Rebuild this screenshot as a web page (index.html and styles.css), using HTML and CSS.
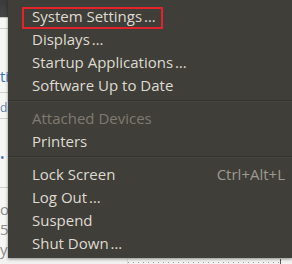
FILE: index.html
```html
<!DOCTYPE html>
<html lang="en">
<head>
  <meta charset="UTF-8" />
  <title>System menu</title>
  <link rel="stylesheet" href="styles.css">
</head>
<body>

<div class="desktop">
  <div class="titlebar"></div>
  <div class="sheet">
    <div class="strip">
      <div class="cell c1"></div>
      <div class="cell c2"><span class="blue">tions</span></div>
      <div class="cell c3"><span class="tan">dd</span></div>
      <div class="cell c4"><span class="blue small">•</span></div>
      <div class="cell c5">
        <span class="grey">ort</span>
        <span class="grey">56</span>
        <span class="grey">ys</span>
      </div>
    </div>
  </div>
  <div class="footer">
    <div class="gap"></div>
    <div class="dots"></div>
    <div class="bar"></div>
  </div>
</div>

<div class="menu">
  <div class="item current">
    <span class="label">System Settings<span class="more">…</span></span>
  </div>
  <div class="item"><span class="label">Displays<span class="more">…</span></span></div>
  <div class="item"><span class="label">Startup Applications<span class="more">…</span></span></div>
  <div class="item"><span class="label">Software Up to Date</span></div>
  <div class="sep"></div>
  <div class="item disabled"><span class="label">Attached Devices</span></div>
  <div class="item"><span class="label">Printers</span></div>
  <div class="sep"></div>
  <div class="item">
    <span class="label">Lock Screen</span>
    <span class="accel">Ctrl+Alt+L</span>
  </div>
  <div class="item"><span class="label">Log Out<span class="more">…</span></span></div>
  <div class="item"><span class="label">Suspend</span></div>
  <div class="item"><span class="label">Shut Down<span class="more">…</span></span></div>
</div>

</body>
</html>
```

FILE: styles.css
```css
html, body {
  margin: 0;
  height: 100%;
  overflow: hidden;
}

body {
  position: relative;
  background: #f4f4f3;
  font-family: "Open Sans", "Noto Sans", sans-serif;
}

.desktop {
  display: flex;
  flex-direction: column;
  height: 264px;
}

.titlebar {
  height: 22px;
  background: linear-gradient(#3b3b3b, #454545);
  border-bottom: 1px solid #c9c9c9;
}

.sheet {
  flex: 1;
  background: #f6f6f5;
}

/* what peeks out to the left of the menu */
.strip {
  width: 60px;
  display: flex;
  flex-direction: column;
}

.cell {
  border-bottom: 1px solid #cfcfcd;
  white-space: nowrap;
  font-size: 15px;
  line-height: 15px;
}

.c1 { height: 10px; }
.c2 { height: 64px; padding-top: 40px; box-sizing: border-box; }
.c3 { height: 26px; padding-top: 6px; box-sizing: border-box; }
.c4 { height: 69px; padding-top: 30px; box-sizing: border-box; }
.c5 {
  border-bottom: none;
  display: flex;
  flex-direction: column;
  padding-top: 11px;
}

.blue { color: #3f74c1; }
.tan { color: #5d7fb8; font-size: 12px; }
.grey { color: #8c8c8a; font-size: 15px; line-height: 20px; }
.small { font-size: 12px; }

.footer {
  height: 6px;
  display: flex;
  background: #f2f2f1;
}

.gap { width: 127px; }

.dots {
  width: 152px;
  border-left: 1px solid #dcdcdc;
  background: repeating-linear-gradient(90deg, #9e9e9c 0 1px, transparent 1px 5px) 0 3px / 100% 1px no-repeat;
}

.bar {
  width: 1px;
  background: #555;
}

/* the open indicator menu */
.menu {
  position: absolute;
  top: 0;
  left: 8px;
  right: 0;
  height: 258px;
  box-sizing: border-box;
  padding-top: 4px;
  background: #403e38;
  box-shadow: 0 1px 3px rgba(0,0,0,0.45);
  color: #dfdbd2;
  font-size: 15px;
}

.item {
  position: relative;
  height: 23px;
  display: flex;
  align-items: center;
  padding: 0 7px 0 24px;
}

.label {
  flex: 1;
  white-space: nowrap;
}

.more {
  margin-left: 2px;
}

.accel {
  color: #9d9a92;
}

.disabled {
  color: #7e7b73;
}

.current .label::after {
  content: "";
  position: absolute;
  left: 14px;
  top: 3px;
  width: 137px;
  height: 18px;
  border: 2px solid #e2232b;
}

.sep {
  height: 10px;
  display: flex;
  flex-direction: column;
  justify-content: center;
}

.sep::before {
  content: "";
  border-top: 1px solid #33322d;
  border-bottom: 1px solid #47453f;
}
```
